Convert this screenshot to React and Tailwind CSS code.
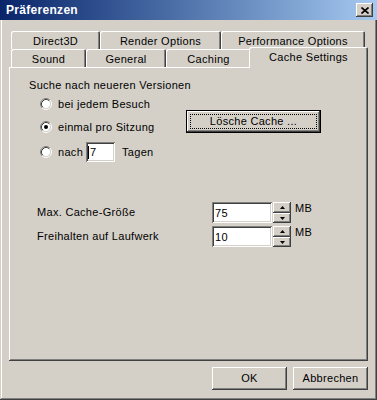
import React from 'react';

const raised = 'shadow-[inset_-1px_-1px_#404040,inset_1px_1px_#ffffff,inset_-2px_-2px_#808080,inset_2px_2px_#d4d0c8]';
const sunken = 'shadow-[inset_1px_1px_#808080,inset_-1px_-1px_#ffffff,inset_2px_2px_#404040,inset_-2px_-2px_#d4d0c8]';
const tabEdge = 'rounded-t-[2px] shadow-[inset_1px_1px_#ffffff,inset_-1px_0_#404040,inset_-2px_0_#808080]';

const Radio = ({ checked }) => (
  <svg width="12" height="12" viewBox="0 0 12 12" className="shrink-0">
    <circle cx="6" cy="6" r="4.5" fill="#ffffff" />
    <path d="M2.11 9.89 A5.5 5.5 0 0 1 9.89 2.11" fill="none" stroke="#808080" />
    <path d="M9.89 2.11 A5.5 5.5 0 0 1 2.11 9.89" fill="none" stroke="#ffffff" />
    <path d="M2.82 9.18 A4.5 4.5 0 0 1 9.18 2.82" fill="none" stroke="#404040" />
    <path d="M9.18 2.82 A4.5 4.5 0 0 1 2.82 9.18" fill="none" stroke="#d4d0c8" />
    {checked && <circle cx="6" cy="6" r="2" fill="#000000" />}
  </svg>
);

const Tab = ({ w, children }) => (
  <div className={`h-[18px] flex items-center justify-center pt-[2px] bg-[#d4d0c8] ${tabEdge}`} style={{ width: w }}>
    {children}
  </div>
);

const Spin = () => (
  <div className="flex flex-col ml-[1px]">
    <div className={`w-[18px] h-[11px] bg-[#d4d0c8] flex items-center justify-center ${raised}`}>
      <svg width="5" height="3" viewBox="0 0 5 3"><path d="M2.5 0 L5 3 L0 3 Z" fill="#000" /></svg>
    </div>
    <div className={`w-[18px] h-[10px] bg-[#d4d0c8] flex items-center justify-center ${raised}`}>
      <svg width="5" height="3" viewBox="0 0 5 3"><path d="M0 0 L5 0 L2.5 3 Z" fill="#000" /></svg>
    </div>
  </div>
);

const SizeRow = ({ label, value, className }) => (
  <div className={`flex items-center ml-[8px] ${className}`}>
    <div className="w-[175px]">{label}</div>
    <div className={`w-[60px] h-[21px] bg-white flex items-center pl-[3px] pt-[1px] ${sunken}`}>{value}</div>
    <Spin />
    <div className="ml-[4px] -mt-[9px]">MB</div>
  </div>
);

export default function App() {
  return (
    <div className="w-[377px] h-[400px] bg-[#d4d0c8] text-[11px] leading-[13px] tracking-[0.3px] text-black font-['Liberation_Sans',Arial,sans-serif] shadow-[inset_-1px_-1px_#404040,inset_1px_1px_#d4d0c8,inset_-2px_-2px_#808080,inset_2px_2px_#ffffff] overflow-hidden">
      {/* Titelleiste */}
      <div className="h-[20px] bg-gradient-to-r from-[#0a246a] to-[#a6caf0] flex items-center justify-between pl-[6px] pr-[4px]">
        <span className="text-white font-bold text-[12px]">Präferenzen</span>
        <div className={`w-[17px] h-[14px] bg-[#d4d0c8] flex items-center justify-center ${raised}`}>
          <svg width="8" height="7" viewBox="0 0 8 7">
            <path d="M0.5 0.5 L7.5 6.5 M7.5 0.5 L0.5 6.5" stroke="#000" strokeWidth="1.6" />
          </svg>
        </div>
      </div>

      <div className="px-[9px] pt-[11px]">
        {/* Reiter */}
        <div className="flex pl-[2px]">
          <Tab w={89}>Direct3D</Tab>
          <Tab w={121}>Render Options</Tab>
          <Tab w={144}>Performance Options</Tab>
        </div>
        <div className="flex pl-[2px] items-end h-[18px]">
          <Tab w={75}>Sound</Tab>
          <Tab w={80}>General</Tab>
          <Tab w={85}>Caching</Tab>
          <div className="relative z-10 -ml-[2px] w-[119px] h-[21px] -mb-[1px] flex justify-center pt-[4px] bg-[#d4d0c8] rounded-t-[2px] shadow-[inset_1px_1px_#ffffff,inset_-1px_0_#404040,inset_-2px_0_#808080]">
            Cache Settings
          </div>
        </div>

        {/* Panel */}
        <div className={`h-[294px] bg-[#d4d0c8] pl-[20px] pt-[12px] ${raised}`}>
          <div>Suche nach neueren Versionen</div>
          <div className="flex items-start">
            <div className="ml-[11px] w-[146px] flex flex-col">
              <div className="flex items-center h-[12px] mt-[6px]">
                <Radio />
                <span className="ml-[6px]">bei jedem Besuch</span>
              </div>
              <div className="flex items-center h-[12px] mt-[11px]">
                <Radio checked />
                <span className="ml-[6px]">einmal pro Sitzung</span>
              </div>
              <div className="flex items-center h-[20px] mt-[9px]">
                <Radio />
                <span className="ml-[6px]">nach</span>
                <div className={`ml-[3px] w-[29px] h-[20px] bg-white flex items-center pl-[2px] ${sunken}`}>
                  <span className="w-px h-[13px] bg-black mr-[1px]" />
                  7
                </div>
                <span className="ml-[7px]">Tagen</span>
              </div>
            </div>
            <button className="mt-[18px] w-[135px] h-[23px] bg-[#d4d0c8] border border-black p-[3px] shadow-[inset_-1px_-1px_#404040,inset_1px_1px_#ffffff,inset_-2px_-2px_#808080]">
              <div className="h-full border border-dotted border-black flex items-center justify-center">
                Lösche Cache ...
              </div>
            </button>
          </div>

          <SizeRow label="Max. Cache-Größe" value="75" className="mt-[40px]" />
          <SizeRow label="Freihalten auf Laufwerk" value="10" className="mt-[3px]" />
        </div>

        {/* Buttons */}
        <div className="flex justify-end gap-[6px] mt-[6px]">
          <button className={`w-[75px] h-[23px] bg-[#d4d0c8] ${raised}`}>OK</button>
          <button className={`w-[75px] h-[23px] bg-[#d4d0c8] ${raised}`}>Abbrechen</button>
        </div>
      </div>
    </div>
  );
}
